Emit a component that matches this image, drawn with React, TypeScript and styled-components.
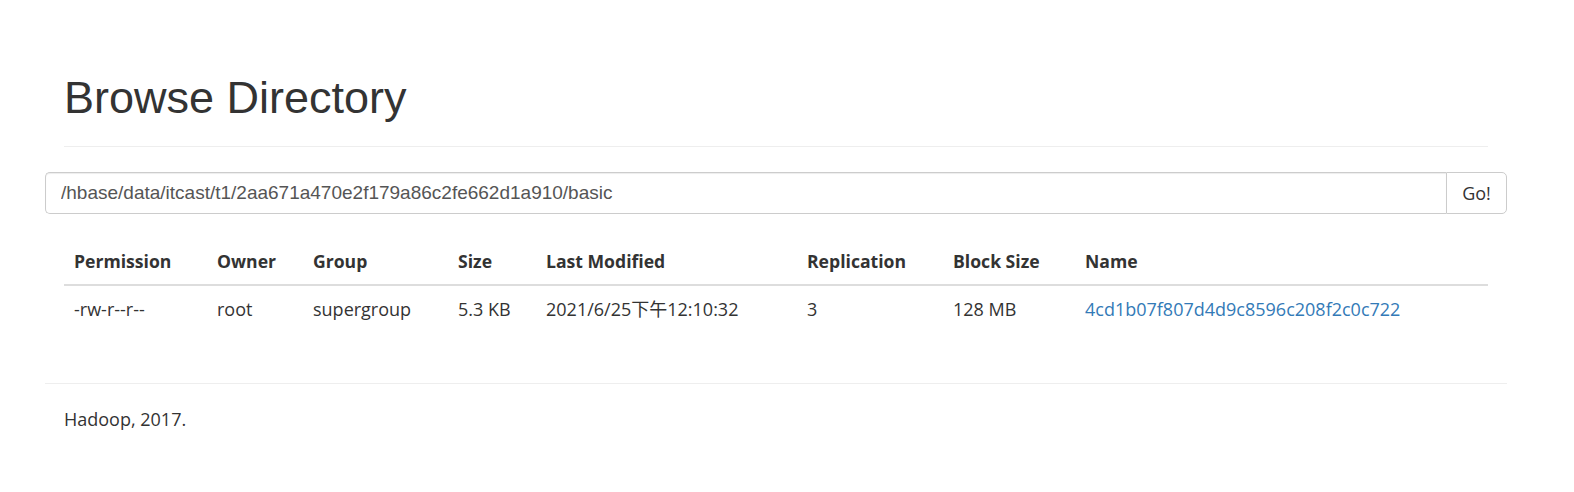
import React from "react";
import styled, { createGlobalStyle } from "styled-components";

const Global = createGlobalStyle`
  html, body { margin: 0; padding: 0; background: #fff; }
  body {
    font-family: "Open Sans", "Noto Sans CJK SC", sans-serif;
    font-size: 18px;
    line-height: 25px;
    color: #333;
  }
  * { box-sizing: border-box; }
`;

const Container = styled.div`
  width: 1462px;
  margin-left: 45px;
`;

const PageHeader = styled.div`
  margin: 0 19px 25px 19px;
  padding-top: 73px;
  padding-bottom: 23.5px;
  border-bottom: 1px solid #eee;
`;

const Title = styled.h1`
  margin: 0;
  font-family: "Liberation Sans", Arial, sans-serif;
  font-weight: 400;
  font-size: 45px;
  line-height: 49.5px;
  color: #333;
`;

const InputGroup = styled.form`
  display: flex;
  height: 42px;
  margin: 0;
`;

const PathInput = styled.input`
  flex: 1;
  height: 42px;
  padding: 0 15px;
  font-family: "Liberation Sans", Arial, sans-serif;
  font-size: 19px;
  color: #555;
  border: 1px solid #ccc;
  border-right: none;
  border-radius: 5px 0 0 5px;
  box-shadow: inset 0 1px 1px rgba(0, 0, 0, 0.075);
  outline: none;
`;

const GoButton = styled.button`
  width: 61px;
  height: 42px;
  padding: 0;
  font-family: "Open Sans", sans-serif;
  font-size: 18px;
  color: #333;
  background: #fff;
  border: 1px solid #ccc;
  border-radius: 0 5px 5px 0;
`;

const Table = styled.table`
  width: 1424px;
  margin: 25px 19px 51px 19px;
  border-collapse: collapse;
  table-layout: fixed;
`;

const Th = styled.th`
  text-align: left;
  font-weight: 700;
  font-size: 17.6px;
  padding: 10px;
  border-bottom: 2px solid #ddd;
  white-space: nowrap;
`;

const Td = styled.td`
  padding: 11px 10px 10px 10px;
  white-space: nowrap;
`;

const NameLink = styled.a`
  color: #337ab7;
  text-decoration: none;
`;

const Rule = styled.hr`
  margin: 0 0 23px 0;
  border: 0;
  border-top: 1px solid #eee;
`;

const Footer = styled.p`
  margin: 0;
  padding-left: 19px;
`;

const cols = [143, 96, 145, 88, 261, 146, 132, 413];
const heads = [
  "Permission",
  "Owner",
  "Group",
  "Size",
  "Last Modified",
  "Replication",
  "Block Size",
  "Name",
];

export default function App() {
  return (
    <>
      <Global />
      <Container>
        <PageHeader>
          <Title>Browse Directory</Title>
        </PageHeader>
        <InputGroup onSubmit={(e) => e.preventDefault()}>
          <PathInput
            defaultValue="/hbase/data/itcast/t1/2aa671a470e2f179a86c2fe662d1a910/basic"
          />
          <GoButton type="submit">Go!</GoButton>
        </InputGroup>
        <Table>
          <colgroup>
            {cols.map((w, i) => (
              <col key={i} style={{ width: w }} />
            ))}
          </colgroup>
          <thead>
            <tr>
              {heads.map((h) => (
                <Th key={h}>{h}</Th>
              ))}
            </tr>
          </thead>
          <tbody>
            <tr>
              <Td>-rw-r--r--</Td>
              <Td>root</Td>
              <Td>supergroup</Td>
              <Td>5.3 KB</Td>
              <Td>2021/6/25下午12:10:32</Td>
              <Td>3</Td>
              <Td>128 MB</Td>
              <Td>
                <NameLink href="#">4cd1b07f807d4d9c8596c208f2c0c722</NameLink>
              </Td>
            </tr>
          </tbody>
        </Table>
        <Rule />
        <Footer>Hadoop, 2017.</Footer>
      </Container>
    </>
  );
}
